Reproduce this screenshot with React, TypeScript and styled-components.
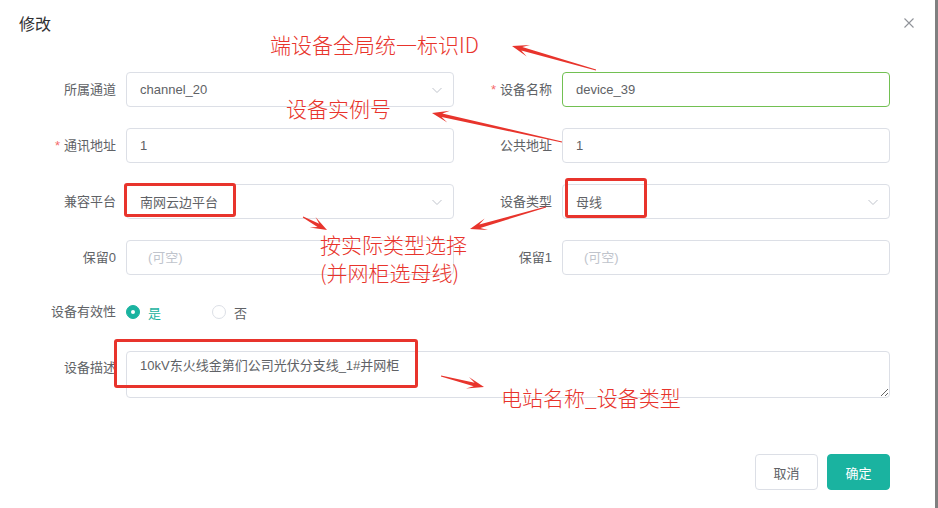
import { createGlobalStyle, styled } from 'styled-components';

const GlobalStyle = createGlobalStyle`
  html, body {
    margin: 0;
    padding: 0;
    background: #ffffff;
  }
  body {
    font-family: 'Liberation Sans', 'Noto Sans CJK SC', sans-serif;
    font-size: 13px;
    color: #606266;
  }
`;

const TEAL = '#1ab3a0';
const RED = '#e8342c';

const Page = styled.div`
  display: flex;
  width: 938px;
  height: 508px;
  overflow: hidden;
`;

const Dialog = styled.div`
  position: relative;
  flex: 1;
  display: flex;
  flex-direction: column;
  background: #ffffff;
`;

const Edge = styled.div`
  width: 3px;
  background: #808080;
`;

const Header = styled.div`
  display: flex;
  align-items: center;
  justify-content: space-between;
  height: 24px;
  padding: 13px 21px 0 19px;
`;

const Title = styled.span`
  font-size: 16px;
  line-height: 24px;
  color: #303133;
`;

const CloseButton = styled.button`
  display: flex;
  padding: 0;
  border: none;
  background: none;
  cursor: pointer;
  margin-top: -5px;
`;

const Form = styled.div`
  display: grid;
  grid-template-columns: 436px 436px;
  padding: 35px 0 0 26px;
`;

const Item = styled.div<{ $span?: boolean; $gap?: number; $top?: boolean }>`
  display: flex;
  align-items: ${(p) => (p.$top ? 'flex-start' : 'center')};
  grid-column: ${(p) => (p.$span ? '1 / span 2' : 'auto')};
  margin-bottom: ${(p) => p.$gap ?? 21}px;
`;

const Label = styled.label<{ $required?: boolean; $top?: boolean }>`
  width: 100px;
  box-sizing: border-box;
  padding-right: 10px;
  padding-top: ${(p) => (p.$top ? 9 : 0)}px;
  text-align: right;
  font-size: 13px;
  line-height: 16px;
  color: #606266;
  white-space: nowrap;
  &::before {
    content: ${(p) => (p.$required ? "'*'" : "''")};
    color: #f56c6c;
    margin-right: 4px;
  }
`;

const TextInput = styled.input<{ $active?: boolean; $empty?: boolean }>`
  width: 328px;
  height: 35px;
  box-sizing: border-box;
  border: 1px solid ${(p) => (p.$active ? '#72c052' : '#dcdfe6')};
  border-radius: 4px;
  padding: 0 13px 0 ${(p) => (p.$empty ? 21 : 13)}px;
  font-family: inherit;
  font-size: 13px;
  color: #606266;
  outline: none;
  background: #ffffff;
  &::placeholder {
    color: #c0c4cc;
  }
`;

const Select = styled.div`
  width: 328px;
  height: 35px;
  box-sizing: border-box;
  display: flex;
  align-items: center;
  justify-content: space-between;
  border: 1px solid #dcdfe6;
  border-radius: 4px;
  padding: 0 10px 0 13px;
  color: #606266;
  cursor: pointer;
`;

const Radios = styled.div`
  display: flex;
  align-items: center;
  height: 32px;
`;

const RadioOption = styled.label<{ $checked?: boolean }>`
  display: flex;
  align-items: center;
  gap: 8px;
  min-width: 86px;
  color: ${(p) => (p.$checked ? TEAL : '#606266')};
  cursor: pointer;
`;

const RadioDot = styled.span<{ $checked?: boolean }>`
  width: 14px;
  height: 14px;
  box-sizing: border-box;
  border-radius: 50%;
  border: 1px solid ${(p) => (p.$checked ? TEAL : '#dcdfe6')};
  background: ${(p) => (p.$checked ? TEAL : '#ffffff')};
  display: flex;
  align-items: center;
  justify-content: center;
  &::after {
    content: '';
    width: 4px;
    height: 4px;
    border-radius: 50%;
    background: ${(p) => (p.$checked ? '#ffffff' : 'transparent')};
  }
`;

const TextArea = styled.textarea`
  width: 764px;
  height: 47px;
  box-sizing: border-box;
  border: 1px solid #dcdfe6;
  border-radius: 4px;
  padding: 4px 13px;
  font-family: inherit;
  font-size: 13px;
  line-height: 20px;
  color: #606266;
  resize: vertical;
  outline: none;
`;

const Footer = styled.div`
  display: flex;
  justify-content: flex-end;
  gap: 9px;
  margin-top: auto;
  padding: 0 45px 18px 0;
`;

const Button = styled.button<{ $primary?: boolean }>`
  width: 63px;
  height: 36px;
  border-radius: 4px;
  border: 1px solid ${(p) => (p.$primary ? TEAL : '#dcdfe6')};
  background: ${(p) => (p.$primary ? TEAL : '#ffffff')};
  color: ${(p) => (p.$primary ? '#ffffff' : '#606266')};
  font-family: inherit;
  font-size: 13px;
  cursor: pointer;
`;

/* red annotations laid over the screenshot */
const Note = styled.div<{ $x: number; $y: number; $lh?: number }>`
  position: absolute;
  left: ${(p) => p.$x}px;
  top: ${(p) => p.$y}px;
  font-family: 'Noto Sans CJK SC', 'Liberation Sans', sans-serif;
  font-size: 21px;
  font-weight: 300;
  line-height: ${(p) => p.$lh ?? 21}px;
  color: ${RED};
  white-space: nowrap;
  pointer-events: none;
`;

const Mark = styled.div<{ $x: number; $y: number; $w: number; $h: number }>`
  position: absolute;
  left: ${(p) => p.$x}px;
  top: ${(p) => p.$y}px;
  width: ${(p) => p.$w}px;
  height: ${(p) => p.$h}px;
  box-sizing: border-box;
  border: 3px solid ${RED};
  border-radius: 3px;
  pointer-events: none;
`;

const ArrowLayer = styled.svg`
  position: absolute;
  left: 0;
  top: 0;
  pointer-events: none;
`;

const arrows: [number, number, number, number][] = [
  [596, 70, 512, 46],
  [562, 142, 432, 113],
  [303, 217, 327, 230],
  [546, 207, 470, 229],
  [441, 376, 484, 387],
];

function arrowPoints([x1, y1, x2, y2]: [number, number, number, number]) {
  const len = Math.hypot(x2 - x1, y2 - y1);
  const ux = (x2 - x1) / len;
  const uy = (y2 - y1) / len;
  const nx = -uy;
  const ny = ux;
  const head = Math.min(17, len * 0.6);
  const base = head * 0.6;
  const pt = (x: number, y: number) => `${x.toFixed(1)},${y.toFixed(1)}`;
  return [
    pt(x1 + nx * 0.5, y1 + ny * 0.5),
    pt(x2 - ux * base + nx * 1.8, y2 - uy * base + ny * 1.8),
    pt(x2 - ux * head + nx * 6, y2 - uy * head + ny * 6),
    pt(x2, y2),
    pt(x2 - ux * head - nx * 6, y2 - uy * head - ny * 6),
    pt(x2 - ux * base - nx * 1.8, y2 - uy * base - ny * 1.8),
    pt(x1 - nx * 0.5, y1 - ny * 0.5),
  ].join(' ');
}

function Chevron() {
  return (
    <svg width="12" height="12" viewBox="0 0 12 12">
      <path d="M1.5 4 L6 8.5 L10.5 4" fill="none" stroke="#c0c4cc" strokeWidth="1" />
    </svg>
  );
}

export default function App() {
  return (
    <>
      <GlobalStyle />
      <Page>
        <Dialog>
          <Header>
            <Title>修改</Title>
            <CloseButton aria-label="close">
              <svg width="10" height="10" viewBox="0 0 10 10">
                <path d="M0.5 0.5 L9.5 9.5 M9.5 0.5 L0.5 9.5" stroke="#909399" strokeWidth="1.1" />
              </svg>
            </CloseButton>
          </Header>

          <Form>
            <Item>
              <Label>所属通道</Label>
              <Select>
                <span>channel_20</span>
                <Chevron />
              </Select>
            </Item>
            <Item>
              <Label $required>设备名称</Label>
              <TextInput $active readOnly value="device_39" />
            </Item>

            <Item>
              <Label $required>通讯地址</Label>
              <TextInput readOnly value="1" />
            </Item>
            <Item>
              <Label>公共地址</Label>
              <TextInput readOnly value="1" />
            </Item>

            <Item>
              <Label>兼容平台</Label>
              <Select>
                <span>南网云边平台</span>
                <Chevron />
              </Select>
            </Item>
            <Item>
              <Label>设备类型</Label>
              <Select>
                <span>母线</span>
                <Chevron />
              </Select>
            </Item>

            <Item>
              <Label>保留0</Label>
              <TextInput $empty readOnly placeholder="(可空)" />
            </Item>
            <Item>
              <Label>保留1</Label>
              <TextInput $empty readOnly placeholder="(可空)" />
            </Item>

            <Item $span $gap={23}>
              <Label>设备有效性</Label>
              <Radios>
                <RadioOption $checked>
                  <RadioDot $checked />
                  是
                </RadioOption>
                <RadioOption>
                  <RadioDot />
                  否
                </RadioOption>
              </Radios>
            </Item>

            <Item $span $top>
              <Label $top>设备描述</Label>
              <TextArea readOnly value="10kV东火线金第们公司光伏分支线_1#并网柜" />
            </Item>
          </Form>

          <Footer>
            <Button>取消</Button>
            <Button $primary>确定</Button>
          </Footer>

          <Mark $x={124} $y={183} $w={112} $h={34} />
          <Mark $x={565} $y={178} $w={82} $h={40} />
          <Mark $x={114} $y={339} $w={304} $h={49} />

          <Note $x={270} $y={34}>端设备全局统一标识ID</Note>
          <Note $x={286} $y={98}>设备实例号</Note>
          <Note $x={320} $y={230} $lh={28}>
            按实际类型选择
            <br />
            (并网柜选母线)
          </Note>
          <Note $x={501} $y={387}>电站名称_设备类型</Note>

          <ArrowLayer width="935" height="508">
            {arrows.map((a, i) => (
              <polygon key={i} points={arrowPoints(a)} fill={RED} />
            ))}
          </ArrowLayer>
        </Dialog>
        <Edge />
      </Page>
    </>
  );
}
